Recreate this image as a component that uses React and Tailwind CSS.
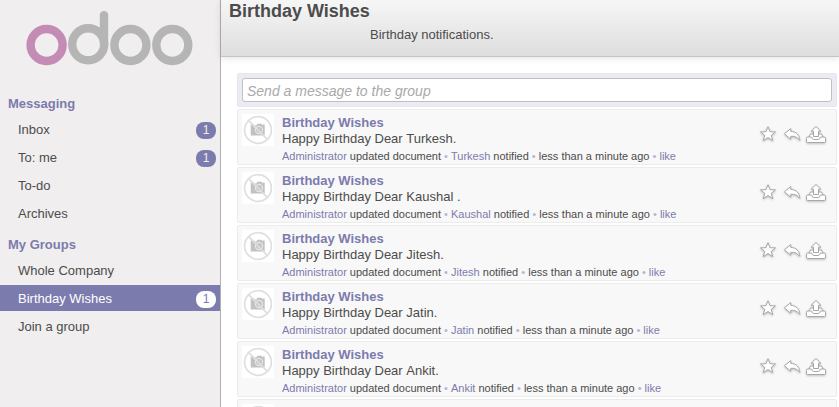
import React from "react";

const messages = [
  { text: "Happy Birthday Dear", suffix: ".", who: "Turkesh" },
  { text: "Happy Birthday Dear", suffix: " .", who: "Kaushal" },
  { text: "Happy Birthday Dear", suffix: ".", who: "Jitesh" },
  { text: "Happy Birthday Dear", suffix: ".", who: "Jatin" },
  { text: "Happy Birthday Dear", suffix: ".", who: "Ankit" },
  { text: "", suffix: "", who: "" },
];

function Logo() {
  return (
    <svg width="220" height="80" viewBox="0 0 220 80" fill="none" strokeWidth="8.4" className="block shrink-0">
      <circle cx="46.6" cy="45" r="16" stroke="#c48bb4" />
      <g stroke="#b5b5b5">
        <circle cx="88.2" cy="44.3" r="16" />
        <path d="M104 15.3V44" strokeLinecap="round" />
        <circle cx="130.4" cy="45" r="16" />
        <circle cx="172.3" cy="45" r="16" />
      </g>
    </svg>
  );
}

function MenuItem({ label, count, active }) {
  return (
    <li className={`flex h-[26px] items-center justify-between pl-[18px] pr-1 ${active ? "bg-[#7c7bad] text-white" : ""}`}>
      <span className="pt-0.5 leading-[26px]">{label}</span>
      {count && (
        <span className={`mt-[3px] h-[17px] w-5 rounded-[8px] text-center text-[12px] leading-[17px] ${active ? "bg-white text-[#7c7bad]" : "bg-[#7c7bad] text-[#eeeeee]"}`}>
          {count}
        </span>
      )}
    </li>
  );
}

function Heading({ children }) {
  return <h2 className="h-[26px] pl-2 text-[13px] font-bold leading-[28px] text-[#7c7bad]">{children}</h2>;
}

function Avatar() {
  return (
    <div className="h-8 w-8 shrink-0 rounded-[2px] bg-white">
      <svg width="32" height="32" viewBox="0 0 32 32" fill="none">
        <path d="M8.7 10.5h3.6v1h2l1.2-1.7h4l1.2 1.7v-1h2V21.5H8.7z" fill="#c2c2c2" />
        <circle cx="17" cy="16" r="3.6" fill="#c6c6c6" stroke="#e6e6e6" strokeWidth="1.2" />
        <path d="M6.5 6.5l19.3 19.3" stroke="#dedede" strokeWidth="1.8" />
        <circle cx="16" cy="16" r="13.4" stroke="#dfdfdf" strokeWidth="1.7" />
      </svg>
    </div>
  );
}

function Actions() {
  return (
    <svg width="70" height="24" viewBox="0 0 70 24" fill="#fff" stroke="#a6a6aa" strokeWidth="1" strokeLinejoin="round" className="mt-2 shrink-0 drop-shadow-[0_1px_1px_rgba(0,0,0,0.22)]">
      <path d="M10 4.7l2 5 5.5.2-4.3 3.5 1.6 5.2-4.8-3-4.8 3 1.6-5.2-4.3-3.5 5.5-.2z" />
      <path d="M26.4 11.8l6.4-5.2v2.8c5.6.3 8.6 3.4 9 9-2.5-3.3-5-4.4-9-4.1v2.9z" />
      <path d="M52.5 12h11l1.6 3h1.1q1.3 0 1.3 1.3v2.9q0 1.3-1.3 1.3H49.8q-1.3 0-1.3-1.3v-2.9q0-1.3 1.3-1.3h1.1z" />
      <path d="M50.9 15h2.7q.6 2.5 2.2 2.5h4.4q1.6 0 2.2-2.5h2.7" fill="none" />
      <path d="M58 4.5l4.8 4.7h-2.3v5.3h-5V9.2h-2.3z" />
    </svg>
  );
}

function Message({ text, suffix, who }) {
  return (
    <article className="flex h-14 shrink-0 rounded-[2px] border border-[#ececec] bg-[#f8f8f8] pl-1 pt-1">
      <Avatar />
      <div className="min-w-0 flex-1 pl-2">
        {who && (
          <>
            <div className="h-4 text-[13px] font-bold leading-[17px] text-[#7c7bad]">Birthday Wishes</div>
            <div className="h-4 text-[13px] leading-[17px]">
              {text} <span className="inline-block whitespace-pre">{who}{suffix}</span>
            </div>
            <div className="mt-[3px] text-[11px] leading-[14px]">
              <span className="text-[#7c7bad]">Administrator</span> updated document
              <span className="text-[#b4b4d5]"> • </span>
              <span className="inline-block text-[#7c7bad]">{who}</span> notified
              <span className="text-[#b4b4d5]"> • </span>less than a minute ago
              <span className="text-[#b4b4d5]"> • </span>
              <span className="text-[#7c7bad]">like</span>
            </div>
          </>
        )}
      </div>
      {who && <div className="mr-[8px] shrink-0"><Actions /></div>}
    </article>
  );
}

export default function App() {
  return (
    <div className="flex h-[407px] w-[839px] overflow-hidden bg-white font-['Liberation_Sans',Arial,sans-serif] text-[13px] text-[#4c4c4c]">
      <aside className="w-[221px] shrink-0 border-r border-[#afafb6] bg-[#f0eeee]">
        <Logo />
        <nav className="pt-[10px]">
          <Heading>Messaging</Heading>
          <ul className="flex flex-col gap-0.5">
            <MenuItem label="Inbox" count="1" />
            <MenuItem label="To: me" count="1" />
            <MenuItem label="To-do" />
            <MenuItem label="Archives" />
          </ul>
          <div className="pt-[5px]">
            <Heading>My Groups</Heading>
          </div>
          <ul className="flex flex-col gap-0.5">
            <MenuItem label="Whole Company" />
            <MenuItem label="Birthday Wishes" count="1" active />
            <MenuItem label="Join a group" />
          </ul>
        </nav>
      </aside>
      <main className="flex min-w-0 flex-1 flex-col">
        <header className="h-[57px] shrink-0 border-b border-[#c4c4c4] bg-linear-to-b from-[#f6f6f6] to-[#dedede] pl-2 shadow-[0_1px_7px_rgba(0,0,0,0.12)]">
          <h1 className="h-[26px] text-[18px] font-bold leading-[22px]">Birthday Wishes</h1>
          <p className="pl-[141px] leading-[17px]">Birthday notifications.</p>
        </header>
        <section className="flex flex-col gap-0.5 pl-4 pr-0.5 pt-4">
          <div className="h-[34px] shrink-0 rounded-[2px] border border-[#e6e6ef] bg-[#ebebf4] p-1">
            <div className="h-6 rounded-[3px] border border-[#c0c0c4] bg-white pl-1 text-[14px] italic leading-[24px] text-[#a9a9a9]">
              Send a message to the group
            </div>
          </div>
          {messages.map((m, i) => (
            <Message key={i} {...m} />
          ))}
        </section>
      </main>
    </div>
  );
}
